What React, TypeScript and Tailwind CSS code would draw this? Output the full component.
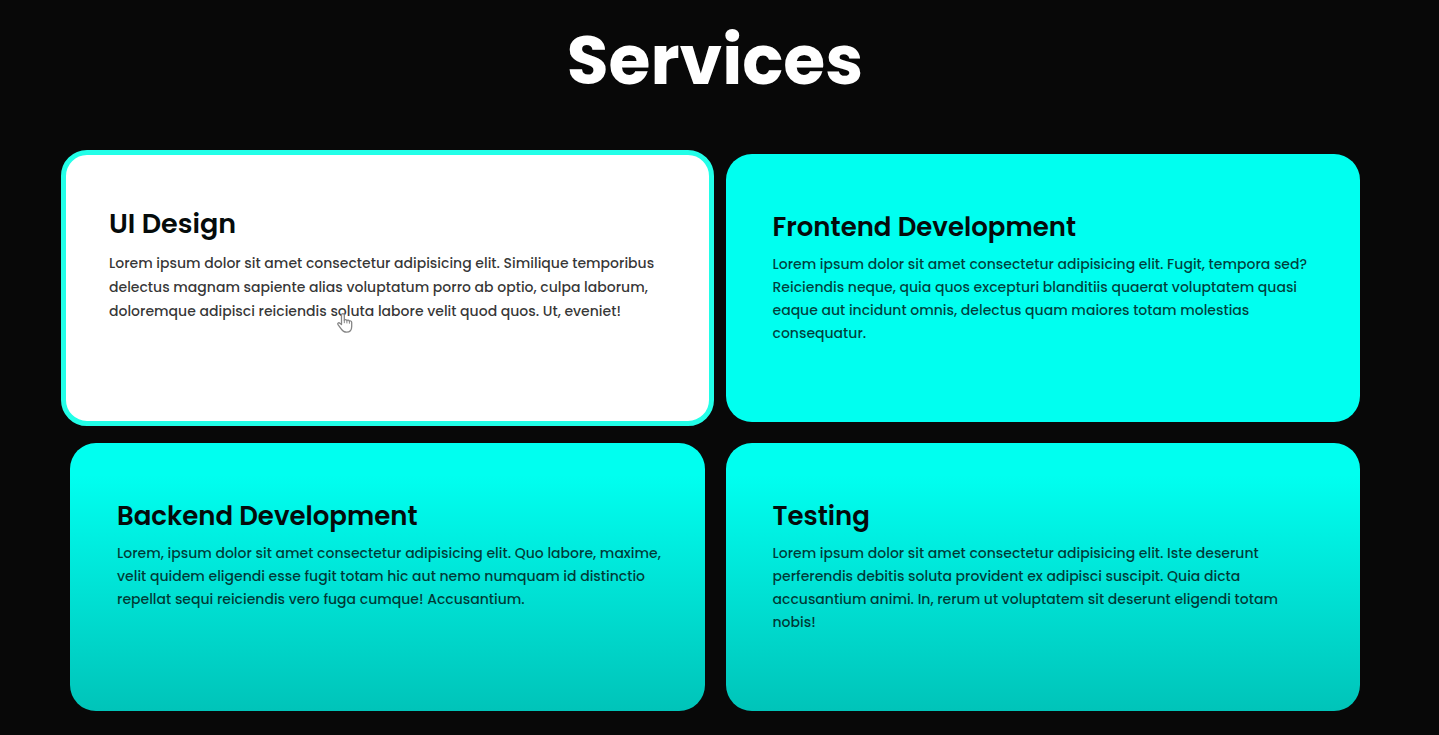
type Service = {
  title: string;
  lines: string[];
  card: string;
  heading: string;
  body: string;
  pointer?: boolean;
};

const plain = "pt-[55px] pl-[47px]";
const gradient =
  "bg-linear-to-b from-[#00fff0] from-12% to-[#00c4b9] pt-[55px] pl-[47px]";
const plainHeading = "text-[26px] leading-[36px]";
const plainBody = "mt-2 text-[14px] leading-[23px] text-black/75";

const services: Service[] = [
  {
    title: "UI Design",
    lines: [
      "Lorem ipsum dolor sit amet consectetur adipisicing elit. Similique temporibus",
      "delectus magnam sapiente alias voluptatum porro ab optio, culpa laborum,",
      "doloremque adipisci reiciendis soluta labore velit quod quos. Ut, eveniet!",
    ],
    card: "-mx-[9px] -my-1 border-[5px] border-[#22ffe8] bg-white pt-[50px] pl-[43px]",
    heading: "text-[27px] leading-[38px]",
    body: "mt-2 text-[14px] leading-6 text-black/80",
    pointer: true,
  },
  {
    title: "Frontend Development",
    lines: [
      "Lorem ipsum dolor sit amet consectetur adipisicing elit. Fugit, tempora sed?",
      "Reiciendis neque, quia quos excepturi blanditiis quaerat voluptatem quasi",
      "eaque aut incidunt omnis, delectus quam maiores totam molestias",
      "consequatur.",
    ],
    card: `bg-[#00fff0] ${plain}`,
    heading: plainHeading,
    body: plainBody,
  },
  {
    title: "Backend Development",
    lines: [
      "Lorem, ipsum dolor sit amet consectetur adipisicing elit. Quo labore, maxime,",
      "velit quidem eligendi esse fugit totam hic aut nemo numquam id distinctio",
      "repellat sequi reiciendis vero fuga cumque! Accusantium.",
    ],
    card: gradient,
    heading: plainHeading,
    body: plainBody,
  },
  {
    title: "Testing",
    lines: [
      "Lorem ipsum dolor sit amet consectetur adipisicing elit. Iste deserunt",
      "perferendis debitis soluta provident ex adipisci suscipit. Quia dicta",
      "accusantium animi. In, rerum ut voluptatem sit deserunt eligendi totam",
      "nobis!",
    ],
    card: gradient,
    heading: plainHeading,
    body: plainBody,
  },
];

function HandPointer() {
  return (
    <svg
      className="absolute top-[157px] left-[270px] h-[22px] w-[18px]"
      viewBox="0 0 18 22"
      fill="#ffffff"
      stroke="#858585"
      strokeWidth="1.3"
      strokeLinejoin="round"
      aria-hidden="true"
    >
      <path d="M5.5 12.5V3.2c0-2 2.8-2 2.8 0v5.3c.2-1.3 2.4-1.2 2.6.2.4-1 2.3-.8 2.5.6.6-.8 2.3-.4 2.3 1.1v4.1c0 3.6-2 5.7-5.2 5.7-2.5 0-3.8-.9-5-2.8L2 12.7c-.9-1.5.8-2.6 1.9-1.4z" />
      <path d="M8.3 8.5v2.7M10.9 8.9v2.5M13.4 9.5v2.2" fill="none" strokeWidth="1" />
    </svg>
  );
}

function ServiceCard({ service }: { service: Service }) {
  return (
    <article className={`relative rounded-[26px] pr-6 pb-8 ${service.card}`}>
      <h2 className={`font-semibold text-[#050b0b] ${service.heading}`}>{service.title}</h2>
      <p className={`font-medium ${service.body}`}>
        {service.lines.map((line) => (
          <span key={line} className="block">
            {line}{" "}
          </span>
        ))}
      </p>
      {service.pointer && <HandPointer />}
    </article>
  );
}

export default function App() {
  return (
    <main className="min-h-screen bg-[#080808] pt-3 pr-[79px] pb-6 pl-[70px] font-['Poppins','Inter',sans-serif]">
      <h1 className="text-center text-[68px] leading-[98px] font-bold text-white">Services</h1>
      <section className="mt-11 grid auto-rows-[minmax(268px,auto)] grid-cols-1 gap-[21px] md:grid-cols-2">
        {services.map((service) => (
          <ServiceCard key={service.title} service={service} />
        ))}
      </section>
    </main>
  );
}
